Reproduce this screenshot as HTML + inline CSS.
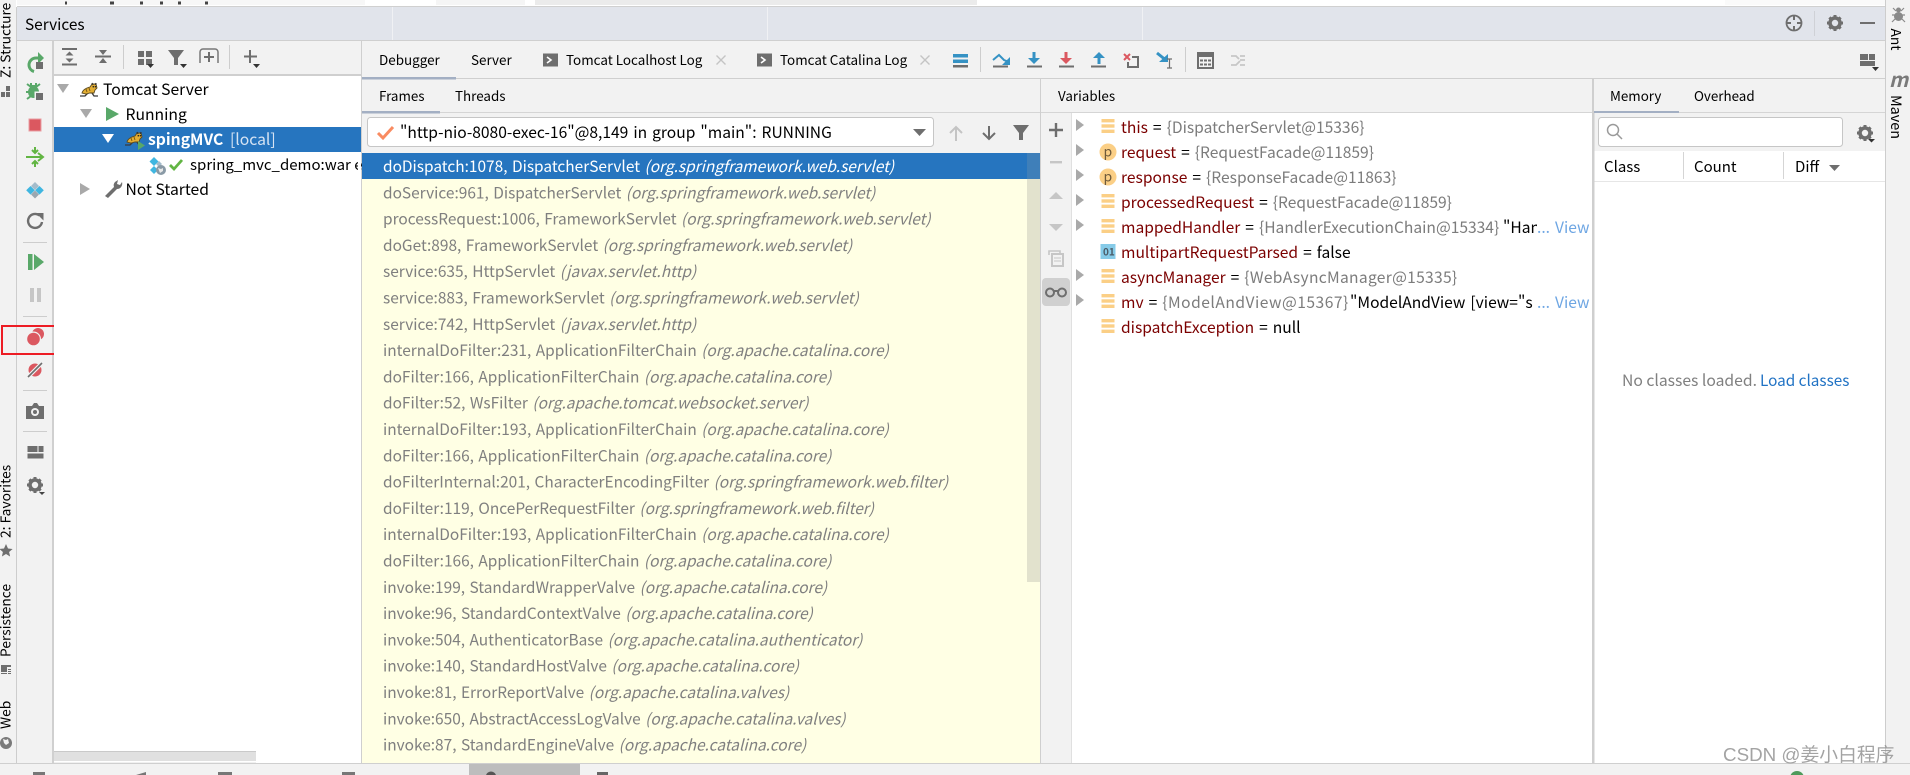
<!DOCTYPE html>
<html lang="zh"><head><meta charset="utf-8"><title>Services</title>
<style>
html,body{margin:0;padding:0;width:1910px;height:775px;overflow:hidden;background:#f2f2f2}
svg{display:block}
text{font-family:"Noto Sans CJK SC","Liberation Sans",sans-serif;font-size:15.6px;fill:#000;white-space:pre}
.g{fill:#808080}.i{font-style:italic}.f{fill:#7f7f7f}.n{fill:#7b0000}.v{fill:#7c7c7c}.b{fill:#6ea6e3}
.w{fill:#fff}
.fr{font-size:15.45px;word-spacing:1px}
.tab{font-size:13.45px}
.sub{font-size:13.4px}
.rot{font-size:13.8px}
.tr{font-size:15.7px}
.vr text{word-spacing:1.5px}
</style></head><body>
<svg width="1910" height="775" viewBox="0 0 1910 775" xmlns="http://www.w3.org/2000/svg">
<defs>
<g id="rt"><path d="M-4-6 4 0-4 6z" fill="#a9a9a9"/></g>
<g id="dt"><path d="M-6-4H6L0 5z" fill="#a9a9a9"/></g>
<g id="fld"><rect x="-6.5" y="-7" width="13" height="3.4" fill="#fbcf86"/><rect x="-6.5" y="-1.7" width="13" height="3.4" fill="#fbcf86"/><rect x="-6.5" y="3.6" width="13" height="3.4" fill="#fbcf86"/></g>
<g id="par"><circle r="8.5" fill="#fbcf86"/><text x="-4.5" y="4.5" style="font-size:14px;fill:#6e5a3a">p</text></g>
<g id="term"><rect x="-8" y="-6.5" width="15" height="13" fill="#6e6e6e"/><path d="M-4-3 0 0-4 3" fill="none" stroke="#fff" stroke-width="1.6"/></g>
<g id="x"><path d="M-4.5-4.5 4.5 4.5M4.5-4.5-4.5 4.5" stroke="#c4c4c4" stroke-width="1.4"/></g>
<g id="gear"><circle r="5" fill="none" stroke="#6e6e6e" stroke-width="3.6"/><g stroke="#6e6e6e" stroke-width="3"><path d="M0-8V-5M0 5V8M-8 0H-5M5 0H8M-5.6-5.6-3.6-3.6M3.6 3.6 5.6 5.6M-5.6 5.6-3.6 3.6M3.6-3.6 5.6-5.6"/></g></g>
<g id="cat"><path d="M-9 6-4 6-1 3M3 3 5 6 9 6" fill="none" stroke="#3a3a3a" stroke-width="1.3"/><path d="M-7 3C-6-1-2-2 1-3L3-6 7-6 8-2 6 0 5 3 1 3-3 4z" fill="#e3ae33" stroke="#5b4a20" stroke-width=".9"/><path d="M3-7 4-5M7-7 6.500-5" stroke="#333" stroke-width="1.300"/><circle cx="4.300" cy="-3.300" r=".8" fill="#222"/><circle cx="6.500" cy="-3.300" r=".8" fill="#222"/><path d="M-3-1-2 2M0-2 1 1" stroke="#7a5a15" stroke-width="1"/></g>
<clipPath id="c1"><rect x="1072" y="113" width="465" height="650"/></clipPath>
</defs>

<!-- top strip -->
<rect width="1910" height="7" fill="#fff"/>
<rect x="17" y="0" width="348" height="5" fill="#f7f7f7"/>
<rect x="436" y="0" width="89" height="5" fill="#f5f5f5"/>
<rect x="535" y="0" width="442" height="5" fill="#ebebeb"/>
<rect x="1725" y="0" width="160" height="5" fill="#fafafa"/>
<path d="M65 3h2M110 3h4M140 3h3M160 3h3M178 3h3M205 3h3" stroke="#444" stroke-width="3"/>
<rect x="17" y="6" width="1868" height="1" fill="#d0d0d0"/>

<!-- stripes -->
<rect x="0" y="0" width="16" height="775" fill="#f2f2f2"/>
<rect x="16" y="7" width="1" height="756" fill="#cdcdcd"/>
<rect x="1885" y="0" width="25" height="775" fill="#f2f2f2"/>
<rect x="1885" y="0" width="1" height="763" fill="#cdcdcd"/>

<!-- header -->
<rect x="17" y="7" width="1868" height="33" fill="#e1e4eb"/>
<rect x="17" y="40" width="1868" height="1" fill="#cfcfcf"/>
<path d="M392.5 7V40M767.5 7V40M1142.5 7V40" stroke="#f0f1f4" stroke-width="1"/>
<text x="25" y="30" style="font-size:15.4px">Services</text>
<circle cx="1794" cy="23" r="7.5" fill="none" stroke="#6e6e6e" stroke-width="1.8"/><path d="M1794 15v5M1794 26v5M1786 23h5M1797 23h5" stroke="#6e6e6e" stroke-width="2"/>
<rect x="1814" y="11" width="1" height="25" fill="#cfd1d6"/>
<use href="#gear" x="1835" y="23"/>
<rect x="1860" y="22" width="15" height="2" fill="#6e6e6e"/>

<!-- left toolbar -->
<rect x="17" y="41" width="35" height="722" fill="#f2f2f2"/>
<rect x="52" y="41" width="2" height="722" fill="#d0d0d0"/>
<!-- rerun -->
<path d="M41 58h-5a7 7 0 0 0-7 7 7 7 0 0 0 5 6.500" fill="none" stroke="#59a869" stroke-width="3"/><path d="M38 52l6 6-6 6z" fill="#59a869"/><rect x="36" y="62" width="7" height="7" fill="#6e6e6e"/>
<!-- debug -->
<ellipse cx="33.500" cy="92" rx="5.500" ry="6" fill="#59a869"/><path d="M30 85h7v3h-7z" fill="#59a869"/><path d="M27 84l4 3M40 84l-4 3M26 92h4M27 99l4-3M31 83v3M36 83v3" fill="none" stroke="#59a869" stroke-width="2"/><rect x="34.500" y="91.500" width="9.500" height="9.500" fill="#f2f2f2"/><rect x="36" y="93" width="7" height="7" fill="#6e6e6e"/>
<!-- stop -->
<rect x="29" y="119" width="12" height="12" fill="#db5860" stroke="#e89ea3"/>
<!-- deploy -->
<path d="M26 157h16M38 153l5 4-5 4M35 147v5M32 150l3 3 3-3M35 167v-5M32 164l3-3 3 3" fill="none" stroke="#62b543" stroke-width="2"/>
<!-- diamonds -->
<path d="M35 182l4 4-4 4-4-4z" fill="#a4bccb"/><path d="M30.500 186l4.300 4.300-4.300 4.300-4.300-4.300z" fill="#40b6e0"/><path d="M39.500 186l4.300 4.300-4.300 4.300-4.300-4.300z" fill="#40b6e0"/><path d="M35 190.500l4 4-4 4-4-4z" fill="#9aa7b0"/>
<!-- refresh -->
<path d="M39.500 215.500a7 7 0 1 0 2.500 6.500" fill="none" stroke="#6e6e6e" stroke-width="2.400"/><path d="M36 213h7.500v7.500z" fill="#6e6e6e"/>
<rect x="23" y="242" width="24" height="1" fill="#cdcdcd"/>
<!-- resume -->
<rect x="28" y="254" width="4.500" height="16" fill="#59a869"/><path d="M34 254l10 8-10 8z" fill="#59a869"/>
<!-- pause -->
<rect x="30" y="288" width="4" height="14" fill="#c6c6c6"/><rect x="37" y="288" width="4" height="14" fill="#c6c6c6"/>
<rect x="23" y="316" width="24" height="1" fill="#cdcdcd"/>
<!-- breakpoints -->
<circle cx="38" cy="334" r="6" fill="#db5860"/><circle cx="33.500" cy="339" r="7.500" fill="#f2f2f2"/><circle cx="33.500" cy="339" r="6.300" fill="#db5860"/>
<circle cx="35" cy="370" r="6.500" fill="#db5860"/><path d="M28 377 42 363" stroke="#f2f2f2" stroke-width="4"/><path d="M28 377 42 363" stroke="#6e6e6e" stroke-width="1.600"/>
<rect x="23" y="390" width="24" height="1" fill="#cdcdcd"/>
<!-- camera -->
<path d="M26 406h6l2-3h3l2 3h5v13H26z" fill="#6e6e6e"/><circle cx="35" cy="412" r="4" fill="#f2f2f2"/><circle cx="35" cy="412" r="2" fill="#6e6e6e"/>
<rect x="23" y="431" width="24" height="1" fill="#cdcdcd"/>
<!-- layout -->
<rect x="27.500" y="446" width="10" height="6" fill="#6e6e6e"/><rect x="38.500" y="446" width="5" height="6" fill="#6e6e6e"/><rect x="27.500" y="453.500" width="16" height="5" fill="#6e6e6e"/>
<use href="#gear" x="35" y="485"/><path d="M39 492h6l-3 3z" fill="#444"/>
<!-- red box -->
<rect x="2" y="326" width="66.500" height="28" fill="none" stroke="#ed1c24" stroke-width="2"/>

<!-- left stripe text -->
<text transform="translate(10.500 78) rotate(-90)" class="rot">Z: Structure</text>
<path d="M1 92h4v5H1zM6 92h4v5H6zM6 86h4v5H6z" fill="#6e6e6e"/>
<text transform="translate(10.500 538) rotate(-90)" class="rot">2: Favorites</text>
<path d="M6 544l2 4.500 4.600.5-3.500 3 1 4.500-4.100-2.500-4.100 2.500 1-4.500-3.500-3 4.600-.5z" fill="#6e6e6e"/>
<text transform="translate(10.500 657) rotate(-90)" class="rot">Persistence</text>
<path d="M1 665h10v2H7v5H1zM8 669h3v1H8zM8 671h3v1H8zM8 673h3v1H8zM1 673h6v1H1z" fill="#6e6e6e"/>
<text transform="translate(10.500 729) rotate(-90)" class="rot">Web</text>
<circle cx="6" cy="743" r="6" fill="#7a7a7a"/><path d="M3 739l3 1 2-1 1 4-3 2-2-2z" fill="#f2f2f2"/>

<!-- right stripe -->
<circle cx="1898.500" cy="10" r="2.500" fill="#8a8a8a"/><ellipse cx="1898.500" cy="16.500" rx="4.500" ry="4.500" fill="#8a8a8a"/><path d="M1893 8l3 3M1904 8l-3 3M1892 15h3M1905 15h-3M1892 22l3-3M1905 22l-3-3" stroke="#8a8a8a" stroke-width="1.200"/>
<text transform="translate(1891 28.500) rotate(90)" class="rot">Ant</text>
<text x="1889" y="87" style="font-size:20px;font-weight:700;font-style:italic;fill:#7a7a7a">m</text>
<text transform="translate(1891 95) rotate(90)" style="font-size:14.400px">Maven</text>

<!-- tree panel -->
<rect x="54" y="41" width="307" height="33" fill="#f2f2f2"/>
<rect x="54" y="74" width="307" height="2" fill="#cfcfcf"/>
<rect x="54" y="76" width="307" height="687" fill="#fff"/>
<rect x="361" y="41" width="1" height="722" fill="#cfcfcf"/>
<!-- tree toolbar -->
<path d="M62 49h15M62 64.500h15" stroke="#6e6e6e" stroke-width="2"/><path d="M69.500 51.500l4 4h-8zM69.500 62.500l4-4h-8z" fill="#6e6e6e"/>
<path d="M95 56.500h16" stroke="#6e6e6e" stroke-width="2"/><path d="M103 55l-4-5h8zM103 58l-4 5h8z" fill="#6e6e6e"/>
<rect x="123" y="45" width="1" height="24" fill="#cdcdcd"/>
<path d="M138 51h6v6h-6zM146 51h6v6h-6zM138 59h6v6h-6zM146 59h6v6h-6z" fill="#6e6e6e"/><path d="M147 64h7l-3.500 4z" fill="#333"/>
<path d="M168 50h16l-6 8v7h-4v-7z" fill="#6e6e6e"/><path d="M180 64h7l-3.500 4z" fill="#333"/>
<path d="M200 63V52a3 3 0 0 1 3-3h12a3 3 0 0 1 3 3v11" fill="none" stroke="#777" stroke-width="1.500"/><path d="M209 52v10M204 57h10" stroke="#6e6e6e" stroke-width="2"/>
<rect x="229" y="45" width="1" height="24" fill="#cdcdcd"/>
<path d="M250 50v13M244 56.500h13" stroke="#6e6e6e" stroke-width="2"/><path d="M253 64h7l-3.500 4z" fill="#333"/>
<!-- tree rows -->
<use href="#dt" x="63" y="88"/><use href="#cat" x="89" y="90"/>
<text x="103" y="95" class="tr">Tomcat Server</text>
<use href="#dt" x="86" y="113"/><path d="M106 107l13 7-13 7z" fill="#59a869"/>
<text x="125.500" y="120" class="tr">Running</text>
<rect x="54" y="127" width="307" height="25" fill="#2675bf"/>
<path d="M102 134h12l-6 9z" fill="#fff"/><use href="#cat" x="134" y="139"/><path d="M138 141l7 4.500-7 4.500z" fill="#59a869"/>
<text x="148" y="145" style="font-size:15.700px;font-weight:700;fill:#fff">spingMVC</text>
<text x="230" y="145" style="font-size:15.700px;fill:#d5e3f3">[local]</text>
<path d="M154 157l4.500 4.500-4.500 4.500-4.500-4.500zM154 166l4 4-4 4-4-4z" fill="#40b6e0"/><path d="M159 161l3 3-3 3-3-3z" fill="#a4bccb"/><circle cx="161" cy="170" r="5" fill="#8a9aa6"/><path d="M158 168l3 1 2-1 0 3-3 2z" fill="#e8e8e8"/>
<path d="M170 165l4 4 8-9" fill="none" stroke="#62b543" stroke-width="2.800"/>
<text x="190" y="170" style="font-size:15px">spring_mvc_demo:war e</text>
<rect x="358" y="153" width="3" height="25" fill="#fff"/>
<path d="M80 183l10 6-10 6z" fill="#a9a9a9"/>
<path d="M105 196l9-9a5 5 0 0 1 1-5l3-2-1 4 3 1 2-3c1 3-1 7-5 7l-9 9z" fill="#6e6e6e"/>
<text x="125.500" y="195" class="tr">Not Started</text>
<rect x="54" y="751" width="202" height="12" fill="#e0e0e0"/><rect x="54" y="751" width="202" height="1" fill="#c9c9c9"/><rect x="54" y="761" width="202" height="1.500" fill="#fff"/>

<!-- right area bar backgrounds -->
<rect x="362" y="41" width="1523" height="37" fill="#f2f2f2"/>
<rect x="362" y="78" width="1523" height="1" fill="#cfcfcf"/>
<rect x="362" y="79" width="1523" height="33" fill="#f2f2f2"/>
<rect x="362" y="112" width="1523" height="1" fill="#d5d5d5"/>
<rect x="362" y="113" width="679" height="40" fill="#f2f2f2"/>
<rect x="362" y="77" width="94" height="2.500" fill="#a3afc3"/>
<rect x="362" y="111" width="78" height="2.500" fill="#a3afc3"/>
<rect x="1594" y="111" width="85" height="2.500" fill="#a3afc3"/>
<!-- tabs -->
<text x="379" y="65" class="tab">Debugger</text>
<text x="471" y="65" class="tab">Server</text>
<use href="#term" x="551" y="60"/>
<text x="566" y="65" class="tab">Tomcat Localhost Log</text>
<use href="#x" x="721" y="60"/>
<use href="#term" x="765" y="60"/>
<text x="780" y="65" class="tab">Tomcat Catalina Log</text>
<use href="#x" x="925" y="60"/>
<!-- debug toolbar -->
<rect x="953" y="54" width="15" height="3.500" fill="#3592c4"/><rect x="953" y="59.500" width="15" height="3.500" fill="#3592c4"/><rect x="953" y="65" width="15" height="2.500" fill="#6e6e6e"/>
<rect x="980" y="47" width="1" height="25" fill="#cdcdcd"/>
<path d="M993 60l6-5 5 5 5 2" fill="none" stroke="#3592c4" stroke-width="2"/><path d="M1010 57v8h-8z" fill="#3592c4"/><rect x="993" y="65.500" width="15" height="2" fill="#6e6e6e"/>
<path d="M1034 52v9" stroke="#3592c4" stroke-width="3"/><path d="M1028 58h12l-6 6z" fill="#3592c4"/><rect x="1027" y="65.500" width="15" height="2" fill="#6e6e6e"/>
<path d="M1066 52v9" stroke="#db5860" stroke-width="3"/><path d="M1060 58h12l-6 6z" fill="#db5860"/><rect x="1059" y="65.500" width="15" height="2" fill="#6e6e6e"/>
<path d="M1099 56v8" stroke="#3592c4" stroke-width="3"/><path d="M1093 58h12l-6-6z" fill="#3592c4"/><rect x="1091" y="65.500" width="15" height="2" fill="#6e6e6e"/>
<path d="M1124 54l6 6M1130 54l-6 6" stroke="#db5860" stroke-width="2"/><path d="M1132 57h6v10h-10v-5" fill="none" stroke="#6e6e6e" stroke-width="2"/>
<path d="M1157 53l10 8" stroke="#3592c4" stroke-width="3"/><path d="M1159 62h9v-8z" fill="#3592c4"/><path d="M1167 59h5M1167 68h5M1169.500 59v9" stroke="#6e6e6e" stroke-width="1.200"/>
<rect x="1185" y="47" width="1" height="25" fill="#cdcdcd"/>
<path d="M1198 53h15v15h-15z" fill="none" stroke="#6e6e6e" stroke-width="2"/><rect x="1198" y="53" width="15" height="4" fill="#6e6e6e"/><path d="M1200 59.500h3v2h-3zM1204 59.500h3v2h-3zM1208 59.500h3v2h-3zM1200 63.500h3v2h-3zM1204 63.500h3v2h-3zM1208 63.500h3v2h-3z" fill="#6e6e6e"/>
<path d="M1231 56h5l3 3M1231 65h5l4-4M1240 56h5M1240 60h5M1240 65h5" fill="none" stroke="#c6c6c6" stroke-width="1.800"/>
<rect x="1860" y="54" width="8" height="6" fill="#6e6e6e"/><rect x="1869" y="54" width="6" height="6" fill="#6e6e6e"/><rect x="1860" y="61" width="15" height="5" fill="#6e6e6e"/><path d="M1872 67h7l-3.500 4z" fill="#333"/>

<!-- frames header -->
<text x="379" y="101" class="sub">Frames</text>
<text x="455" y="101" class="sub">Threads</text>
<text x="1058" y="101" class="sub">Variables</text>
<text x="1610" y="101" class="sub">Memory</text>
<text x="1694" y="101" class="sub">Overhead</text>
<rect x="1040" y="79" width="1" height="684" fill="#cfcfcf"/>

<!-- combobox -->
<rect x="367.500" y="117.500" width="566" height="29" rx="3" fill="#fff" stroke="#c6c6c6"/>
<path d="M378 133l5 5 10-11" fill="none" stroke="#f98b61" stroke-width="3"/>
<text x="400" y="138" style="font-size:15.600px;word-spacing:1.500px">"http-nio-8080-exec-16"@8,149 in group "main": RUNNING</text>
<path d="M913 129h13l-6.500 7z" fill="#6e6e6e"/>
<path d="M956 128v13M950 133l6-6 6 6" fill="none" stroke="#c4c4c4" stroke-width="2"/>
<path d="M989 126v13M983 133l6 6 6-6" fill="none" stroke="#6e6e6e" stroke-width="2"/>
<path d="M1013 125h16l-6 8v7h-4v-7z" fill="#6e6e6e"/>

<!-- frames list -->
<rect x="362" y="153" width="678" height="610" fill="#ffffe4"/>
<rect x="1027" y="179" width="13" height="403" fill="#e2e2cd"/>
<rect x="362" y="153" width="678" height="26" fill="#2675bf"/>
<rect x="1027" y="153" width="13" height="26" fill="#3f7fb9"/>
<g transform="translate(0 1)">
<text x="383" y="171" class="fr w">doDispatch:1078, DispatcherServlet <tspan class="i w">(org.springframework.web.servlet)</tspan></text>
<text x="383" y="197.300" class="fr f">doService:961, DispatcherServlet <tspan class="i">(org.springframework.web.servlet)</tspan></text>
<text x="383" y="223.600" class="fr f">processRequest:1006, FrameworkServlet <tspan class="i">(org.springframework.web.servlet)</tspan></text>
<text x="383" y="249.900" class="fr f">doGet:898, FrameworkServlet <tspan class="i">(org.springframework.web.servlet)</tspan></text>
<text x="383" y="276.200" class="fr f">service:635, HttpServlet <tspan class="i">(javax.servlet.http)</tspan></text>
<text x="383" y="302.500" class="fr f">service:883, FrameworkServlet <tspan class="i">(org.springframework.web.servlet)</tspan></text>
<text x="383" y="328.800" class="fr f">service:742, HttpServlet <tspan class="i">(javax.servlet.http)</tspan></text>
<text x="383" y="355.100" class="fr f">internalDoFilter:231, ApplicationFilterChain <tspan class="i">(org.apache.catalina.core)</tspan></text>
<text x="383" y="381.400" class="fr f">doFilter:166, ApplicationFilterChain <tspan class="i">(org.apache.catalina.core)</tspan></text>
<text x="383" y="407.700" class="fr f">doFilter:52, WsFilter <tspan class="i">(org.apache.tomcat.websocket.server)</tspan></text>
<text x="383" y="434" class="fr f">internalDoFilter:193, ApplicationFilterChain <tspan class="i">(org.apache.catalina.core)</tspan></text>
<text x="383" y="460.300" class="fr f">doFilter:166, ApplicationFilterChain <tspan class="i">(org.apache.catalina.core)</tspan></text>
<text x="383" y="486.600" class="fr f">doFilterInternal:201, CharacterEncodingFilter <tspan class="i">(org.springframework.web.filter)</tspan></text>
<text x="383" y="512.900" class="fr f">doFilter:119, OncePerRequestFilter <tspan class="i">(org.springframework.web.filter)</tspan></text>
<text x="383" y="539.200" class="fr f">internalDoFilter:193, ApplicationFilterChain <tspan class="i">(org.apache.catalina.core)</tspan></text>
<text x="383" y="565.500" class="fr f">doFilter:166, ApplicationFilterChain <tspan class="i">(org.apache.catalina.core)</tspan></text>
<text x="383" y="591.800" class="fr f">invoke:199, StandardWrapperValve <tspan class="i">(org.apache.catalina.core)</tspan></text>
<text x="383" y="618.100" class="fr f">invoke:96, StandardContextValve <tspan class="i">(org.apache.catalina.core)</tspan></text>
<text x="383" y="644.400" class="fr f">invoke:504, AuthenticatorBase <tspan class="i">(org.apache.catalina.authenticator)</tspan></text>
<text x="383" y="670.700" class="fr f">invoke:140, StandardHostValve <tspan class="i">(org.apache.catalina.core)</tspan></text>
<text x="383" y="697" class="fr f">invoke:81, ErrorReportValve <tspan class="i">(org.apache.catalina.valves)</tspan></text>
<text x="383" y="723.300" class="fr f">invoke:650, AbstractAccessLogValve <tspan class="i">(org.apache.catalina.valves)</tspan></text>
<text x="383" y="749.600" class="fr f">invoke:87, StandardEngineValve <tspan class="i">(org.apache.catalina.core)</tspan></text>
</g>

<!-- vars side toolbar -->
<rect x="1041" y="113" width="31" height="650" fill="#f2f2f2"/>
<rect x="1071.500" y="113" width="1" height="650" fill="#cfcfcf"/>
<path d="M1056 123v14M1049 130h14" stroke="#6e6e6e" stroke-width="2.400"/>
<rect x="1050" y="161" width="12" height="2.400" fill="#c6c6c6"/>
<path d="M1049 199l7-7 7 7z" fill="#c6c6c6"/><path d="M1049 224l7 7 7-7z" fill="#c6c6c6"/>
<path d="M1049 255v-4h11v3" fill="none" stroke="#c6c6c6" stroke-width="1.600"/><rect x="1052" y="254" width="11" height="12" fill="none" stroke="#c6c6c6" stroke-width="2"/><path d="M1054 258h7M1054 261h7" stroke="#c6c6c6"/>
<rect x="1042" y="278" width="28" height="28" rx="4" fill="#d0d0d0"/>
<circle cx="1050" cy="292.500" r="4" fill="none" stroke="#6e6e6e" stroke-width="2"/><circle cx="1062" cy="292.500" r="4" fill="none" stroke="#6e6e6e" stroke-width="2"/><path d="M1054 291h4" stroke="#6e6e6e" stroke-width="2"/>

<!-- variables -->
<rect x="1072" y="113" width="520" height="650" fill="#fff"/>
<use href="#rt" x="1080" y="125"/><use href="#rt" x="1080" y="150"/><use href="#rt" x="1080" y="175"/><use href="#rt" x="1080" y="200"/><use href="#rt" x="1080" y="225"/><use href="#rt" x="1080" y="275"/><use href="#rt" x="1080" y="300"/>
<use href="#fld" x="1108" y="126"/><use href="#par" x="1108" y="152"/><use href="#par" x="1108" y="177"/><use href="#fld" x="1108" y="201"/><use href="#fld" x="1108" y="226"/>
<rect x="1100.500" y="244" width="15" height="15" fill="#86cbe8"/><text x="1103" y="255.500" style="font-size:10px;font-weight:700;fill:#4b5c68">01</text>
<use href="#fld" x="1108" y="276"/><use href="#fld" x="1108" y="301"/><use href="#fld" x="1108" y="326"/>
<g clip-path="url(#c1)"><g class="vr" transform="translate(0 1)">
<text x="1121" y="132"><tspan class="n">this</tspan> = <tspan class="v">{DispatcherServlet@15336}</tspan></text>
<text x="1121" y="157"><tspan class="n">request</tspan> = <tspan class="v">{RequestFacade@11859}</tspan></text>
<text x="1121" y="182"><tspan class="n">response</tspan> = <tspan class="v">{ResponseFacade@11863}</tspan></text>
<text x="1121" y="207"><tspan class="n">processedRequest</tspan> = <tspan class="v">{RequestFacade@11859}</tspan></text>
<text x="1121" y="232"><tspan class="n">mappedHandler</tspan> = <tspan class="v">{HandlerExecutionChain@15334}</tspan></text>
<text x="1503" y="232">"Han</text>
<text x="1121" y="257"><tspan class="n">multipartRequestParsed</tspan> = false</text>
<text x="1121" y="282"><tspan class="n">asyncManager</tspan> = <tspan class="v" style="letter-spacing:.3px">{WebAsyncManager@15335}</tspan></text>
<text x="1121" y="307"><tspan class="n">mv</tspan> = <tspan class="v" style="letter-spacing:.5px">{ModelAndView@15367}</tspan></text>
<text x="1350" y="307">"ModelAndView [view="s</text>
<text x="1121" y="332"><tspan class="n">dispatchException</tspan> = null</text>
</g></g>
<g transform="translate(0 1)"><text x="1537" y="232" class="b">...</text><text x="1555" y="232" class="b">View</text>
<text x="1537" y="307" class="b">...</text><text x="1555" y="307" class="b">View</text></g>
<rect x="1592" y="113" width="2.500" height="650" fill="#cfcfcf"/>
<rect x="1592" y="79" width="2" height="34" fill="#cfcfcf"/>

<!-- memory -->
<rect x="1594.500" y="113" width="290.500" height="38" fill="#f2f2f2"/>
<rect x="1598.500" y="117.500" width="244" height="29" rx="3" fill="#fff" stroke="#c6c6c6"/>
<circle cx="1613" cy="130" r="5.500" fill="none" stroke="#9a9a9a" stroke-width="1.500"/><path d="M1617 134l5 5" stroke="#9a9a9a" stroke-width="1.500"/>
<use href="#gear" x="1865" y="133"/><path d="M1868 139h7l-3.500 3.500z" fill="#333"/>
<rect x="1594.500" y="151" width="290.500" height="612" fill="#fff"/>
<text x="1604" y="172" style="font-size:15px">Class</text><text x="1694" y="172" style="font-size:15px">Count</text><text x="1795" y="172" style="font-size:15px">Diff</text>
<path d="M1829 165h11l-5.500 6z" fill="#6e6e6e"/>
<rect x="1683" y="152" width="1" height="27" fill="#d5d5d5"/><rect x="1783" y="152" width="1" height="27" fill="#d5d5d5"/>
<rect x="1594.500" y="181" width="290.500" height="1" fill="#e6e6e6"/>
<text x="1622" y="386" class="g" style="font-size:15.700px">No classes loaded.</text>
<text x="1760" y="386" style="font-size:15.300px;fill:#2072c4">Load classes</text>

<!-- bottom bar -->
<rect x="0" y="763" width="1910" height="12" fill="#f2f2f2"/>
<rect x="0" y="763" width="1910" height="1" fill="#cfcfcf"/>
<rect x="469" y="764" width="111" height="11" fill="#bdbdbd"/>
<ellipse cx="491" cy="776" rx="5" ry="4.500" fill="#555"/>
<rect x="597" y="772" width="11" height="3" fill="#666"/>
<rect x="33" y="772" width="12" height="3" fill="#777"/><path d="M136 775l10-3v3z" fill="#777"/><rect x="218" y="772" width="14" height="3" fill="#777"/><rect x="342" y="772" width="13" height="3" fill="#777"/>
<circle cx="1797" cy="778" r="7" fill="#4f9a5b"/>
<text x="1723" y="761" style="font-size:18.800px;fill:#9a9a9a;font-family:'Liberation Sans','Noto Sans CJK SC',sans-serif" opacity=".9">CSDN @姜小白程序</text>
</svg>
</body></html>
